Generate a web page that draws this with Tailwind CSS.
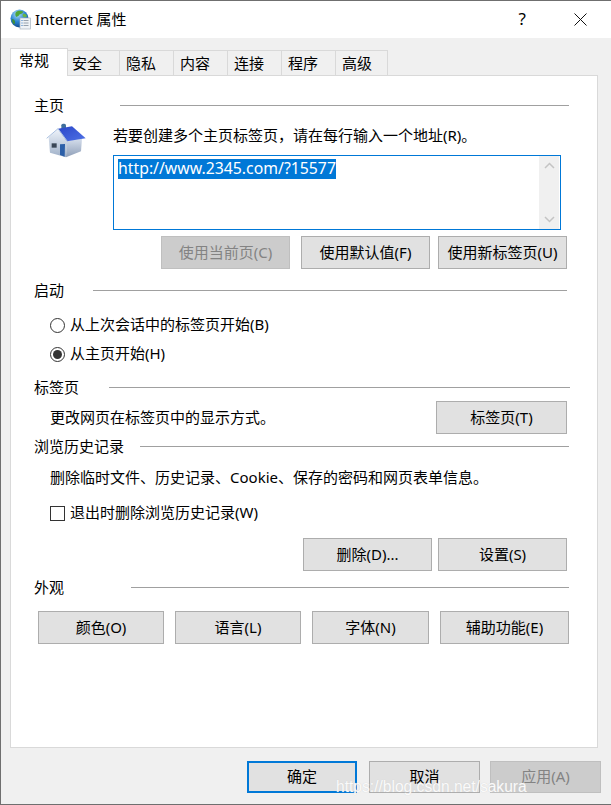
<!DOCTYPE html>
<html lang="en">
<head>
    <meta charset="UTF-8">
    <title>Internet 属性</title>
    <script src="https://cdn.jsdelivr.net/npm/@tailwindcss/browser@4"></script>
</head>
<body class="bg-[#f0f0f0]">
<div class="relative w-[611px] h-[805px] overflow-hidden bg-[#f0f0f0] border-l border-t border-b border-[#6f6f6f] text-[15px] leading-5 text-black font-['Noto_Sans','Noto_Sans_CJK_SC',sans-serif]">

    <!-- title bar -->
    <div class="flex items-center h-[37px] bg-white">
        <svg class="ml-[9px] w-[21px] h-[21px]" viewBox="0 0 21 21">
            <defs>
                <radialGradient id="globe" cx="0.4" cy="0.25" r="0.85">
                    <stop offset="0" stop-color="#b5e2fa"/>
                    <stop offset="0.5" stop-color="#2a84d2"/>
                    <stop offset="1" stop-color="#0d3a78"/>
                </radialGradient>
            </defs>
            <circle cx="9.5" cy="9.5" r="9" fill="url(#globe)"/>
            <path d="M6 3 C8 1.5 11 1.5 13 2.5 C13.5 4 11 5 9.5 5.5 C9 7 7.5 7 6.5 8 C5 7 5 4.5 6 3 Z" fill="#4fa53a"/>
            <path d="M13 5 C15 4.5 16.5 5.5 17 7.5 L14.5 8.5 C13 8 12 6 13 5 Z" fill="#69b545"/>
            <path d="M2 10 C3.5 10 5 11 5 13 C5 14.5 4.5 15 4 15.5 C2.5 14 2 12 2 10 Z" fill="#3d8f38"/>
            <rect x="10" y="9" width="10.5" height="11" fill="#eef2f6" stroke="#a9b4bf" stroke-width="0.7"/>
            <path d="M11.5 11.5h1M11.5 14h1M11.5 16.5h1" stroke="#2f78c4" stroke-width="1.2"/>
            <path d="M13.5 11.5h5M13.5 14h5M13.5 16.5h5" stroke="#8c99a6" stroke-width="0.9"/>
        </svg>
        <span class="ml-[4px] pb-[2px]">Internet 属性</span>
        <span class="ml-auto mr-[48px] text-[17px] pb-[2px]">?</span>
        <svg class="mr-[24px] w-[13px] h-[13px]" viewBox="0 0 13 13" fill="none" stroke="#111" stroke-width="1">
            <path d="M0.5 0.5L12.5 12.5M12.5 0.5L0.5 12.5"/>
        </svg>
    </div>

    <!-- tabs -->
    <div class="relative z-10 flex items-end h-[37px] pl-[9px]">
        <div class="flex items-center w-[58px] h-[28px] -mb-px pl-[8px] pb-[6px] bg-white border-l border-t border-r border-[#d9d9d9]">常规</div>
        <div class="flex items-center w-[52px] h-[25px] pl-[4px] pb-[1px] bg-[#f0f0f0] border-t border-r border-[#d9d9d9]">安全</div>
        <div class="flex items-center w-[54px] h-[25px] pl-[6px] pb-[1px] bg-[#f0f0f0] border-t border-r border-[#d9d9d9]">隐私</div>
        <div class="flex items-center w-[54px] h-[25px] pl-[6px] pb-[1px] bg-[#f0f0f0] border-t border-r border-[#d9d9d9]">内容</div>
        <div class="flex items-center w-[54px] h-[25px] pl-[6px] pb-[1px] bg-[#f0f0f0] border-t border-r border-[#d9d9d9]">连接</div>
        <div class="flex items-center w-[54px] h-[25px] pl-[6px] pb-[1px] bg-[#f0f0f0] border-t border-r border-[#d9d9d9]">程序</div>
        <div class="flex items-center w-[52px] h-[25px] pl-[6px] pb-[1px] bg-[#f0f0f0] border-t border-r border-[#d9d9d9]">高级</div>
    </div>

    <!-- panel -->
    <div class="flex flex-col ml-[9px] w-[588px] h-[673px] bg-white border border-[#d9d9d9]">

        <div class="flex items-center h-5 mt-[19px] ml-[23px] mr-[28px]">
            <span class="pb-[1px]">主页</span>
            <div class="flex-1 ml-[56px] h-px bg-[#a0a0a0]"></div>
        </div>

        <div class="flex ml-[35px]">
            <svg class="w-[40px] h-[36px] mt-[8px]" viewBox="48 9 120 108">
                <defs>
                    <linearGradient id="roof" x1="0" y1="0" x2="1" y2="1">
                        <stop offset="0" stop-color="#2a46c8"/>
                        <stop offset="1" stop-color="#4f72e6"/>
                    </linearGradient>
                    <linearGradient id="wall" x1="0" y1="0" x2="0" y2="1">
                        <stop offset="0" stop-color="#eef3fa"/>
                        <stop offset="1" stop-color="#9fb0c8"/>
                    </linearGradient>
                    <linearGradient id="side" x1="0" y1="0" x2="0" y2="1">
                        <stop offset="0" stop-color="#d5deec"/>
                        <stop offset="1" stop-color="#8f9fb8"/>
                    </linearGradient>
                </defs>
                <rect x="94" y="11" width="14" height="18" rx="5" fill="#3f6f9c"/>
                <path d="M110 62 L156 56 L153 94 L108 112 Z" fill="url(#side)"/>
                <path d="M56 52 L84 27 L112 62 L108 112 L60 98 Z" fill="url(#wall)"/>
                <path d="M84 26 L126 19 L167 55 L111 64 Z" fill="url(#roof)"/>
                <path d="M50 55 L84 26 L112 64" fill="none" stroke="#a9c0e0" stroke-width="3"/>
                <rect x="65" y="70" width="15" height="13" fill="#3a4656"/>
                <path d="M90 73 L105 72 L104 110 L90 105 Z" fill="#2c5fa8"/>
            </svg>
            <div class="ml-[27px]">
                <div class="h-5 mt-[10px]">若要创建多个主页标签页，请在每行输入一个地址(R)。</div>
                <div class="flex justify-between w-[448px] h-[75px] mt-[10px] bg-white border border-[#0078d7]">
                    <div class="pl-[4px] pt-[2px]"><span class="inline-block h-5 leading-[19px] text-[15.8px] bg-[#0078d7] text-white">http://www.2345.com/?15577</span></div>
                    <div class="flex flex-col justify-between items-center w-[20px] mr-px py-[6px] bg-[#f0f0f0]">
                        <svg class="w-[11px] h-[7px]" viewBox="0 0 11 7" fill="none" stroke="#c4c4c4" stroke-width="1.5"><path d="M1 6L5.5 1.5L10 6"/></svg>
                        <svg class="w-[11px] h-[7px]" viewBox="0 0 11 7" fill="none" stroke="#c4c4c4" stroke-width="1.5"><path d="M1 1L5.5 5.5L10 1"/></svg>
                    </div>
                </div>
            </div>
        </div>

        <div class="flex justify-end mt-[6px] mr-[30px]">
            <button class="w-[129px] h-[33px] pb-[2px] bg-[#cccccc] border border-[#bfbfbf] text-[#838383]">使用当前页(C)</button>
            <button class="w-[129px] h-[33px] pb-[2px] ml-[11px] bg-[#e1e1e1] border border-[#adadad]">使用默认值(F)</button>
            <button class="w-[129px] h-[33px] pb-[2px] ml-[8px] bg-[#e1e1e1] border border-[#adadad]">使用新标签页(U)</button>
        </div>

        <div class="flex items-center h-5 mt-[11px] ml-[23px] mr-[30px]">
            <span class="pb-[1px]">启动</span>
            <div class="flex-1 ml-[29px] h-px bg-[#a0a0a0]"></div>
        </div>

        <div class="flex items-center h-5 mt-[15px] ml-[39px]">
            <span class="w-[15px] h-[15px] rounded-full bg-white border border-[#333333]"></span>
            <span class="ml-[5px] pb-[2px]">从上次会话中的标签页开始(B)</span>
        </div>
        <div class="flex items-center h-5 mt-[9px] ml-[39px]">
            <span class="flex items-center justify-center w-[15px] h-[15px] rounded-full bg-white border border-[#333333]">
                <span class="w-[9px] h-[9px] rounded-full bg-[#333333]"></span>
            </span>
            <span class="ml-[5px] pb-[2px]">从主页开始(H)</span>
        </div>

        <div class="flex items-center h-5 mt-[13px] ml-[23px] mr-[27px]">
            <span class="pb-[1px]">标签页</span>
            <div class="flex-1 ml-[30px] h-px bg-[#a0a0a0]"></div>
        </div>

        <div class="flex items-center justify-between h-[33px] mt-[4px] ml-[39px] mr-[30px]">
            <span class="pb-[2px]">更改网页在标签页中的显示方式。</span>
            <button class="w-[131px] h-[33px] pb-[2px] bg-[#e1e1e1] border border-[#adadad]">标签页(T)</button>
        </div>

        <div class="flex items-center h-5 mt-[2px] ml-[23px] mr-[28px]">
            <span class="pb-[1px]">浏览历史记录</span>
            <div class="flex-1 ml-[16px] h-px bg-[#a0a0a0]"></div>
        </div>

        <div class="h-5 mt-[11px] ml-[39px]">删除临时文件、历史记录、Cookie、保存的密码和网页表单信息。</div>

        <div class="flex items-center h-5 mt-[16px] ml-[39px]">
            <span class="w-[15px] h-[15px] bg-white border border-[#333333]"></span>
            <span class="ml-[5px] pb-[2px]">退出时删除浏览历史记录(W)</span>
        </div>

        <div class="flex justify-end mt-[15px] mr-[30px]">
            <button class="w-[129px] h-[33px] pb-[2px] bg-[#e1e1e1] border border-[#adadad]">删除(D)...</button>
            <button class="w-[129px] h-[33px] pb-[2px] ml-[6px] bg-[#e1e1e1] border border-[#adadad]">设置(S)</button>
        </div>

        <div class="flex items-center h-5 mt-[6px] ml-[23px] mr-[28px]">
            <span class="pb-[1px]">外观</span>
            <div class="flex-1 ml-[67px] h-px bg-[#a0a0a0]"></div>
        </div>

        <div class="flex mt-[14px] ml-[27px]">
            <button class="w-[126px] h-[33px] pb-[2px] bg-[#e1e1e1] border border-[#adadad]">颜色(O)</button>
            <button class="w-[126px] h-[33px] pb-[2px] ml-[11px] bg-[#e1e1e1] border border-[#adadad]">语言(L)</button>
            <button class="w-[117px] h-[33px] pb-[2px] ml-[11px] bg-[#e1e1e1] border border-[#adadad]">字体(N)</button>
            <button class="w-[129px] h-[33px] pb-[2px] ml-[11px] bg-[#e1e1e1] border border-[#adadad]">辅助功能(E)</button>
        </div>
    </div>

    <!-- footer buttons -->
    <div class="flex justify-end mt-[13px] mr-[10px]">
        <button class="w-[110px] h-[32px] pb-[2px] bg-[#e1e1e1] border-2 border-[#0078d7]">确定</button>
        <button class="w-[111px] h-[32px] pb-[2px] ml-[12px] bg-[#e1e1e1] border border-[#adadad]">取消</button>
        <button class="w-[111px] h-[32px] pb-[2px] ml-[10px] bg-[#cccccc] border border-[#bfbfbf] text-[#838383]">应用(A)</button>
    </div>

    <!-- watermark -->
    <span class="absolute left-[335px] top-[776px] text-[15.6px] text-white/90 font-['Liberation_Sans',sans-serif] [text-shadow:0_0_1px_#c8c8c8]">https://blog.csdn.net/sakura</span>
</div>
</body>
</html>
